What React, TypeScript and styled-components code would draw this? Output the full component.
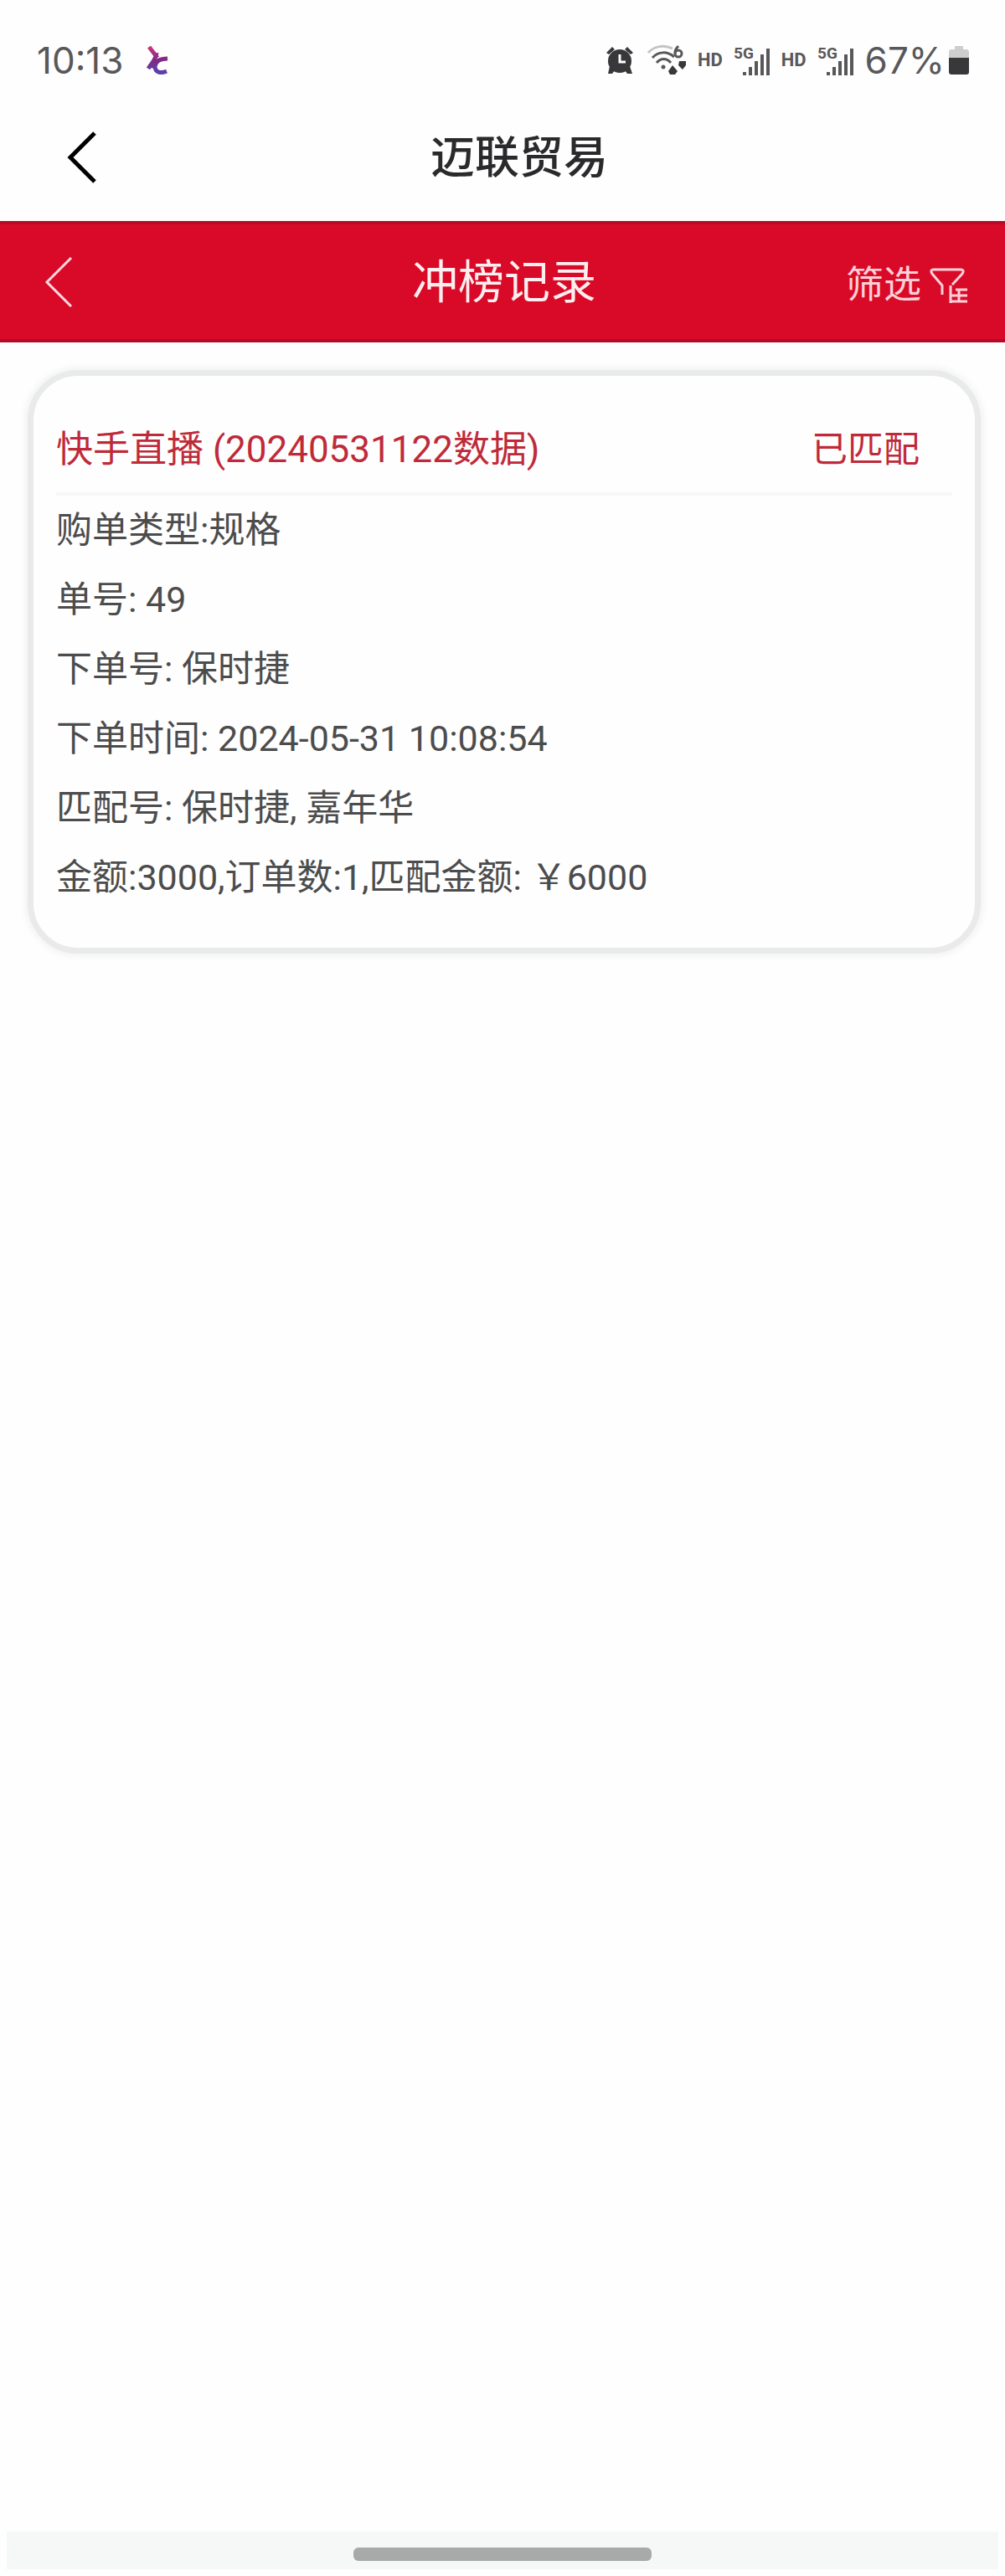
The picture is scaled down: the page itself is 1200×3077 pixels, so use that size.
import React from "react";
import styled, { createGlobalStyle } from "styled-components";

const GlobalStyle = createGlobalStyle`
  * { box-sizing: border-box; }
  body {
    margin: 0;
    background: #fefefe;
    font-family: Roboto, "Noto Sans CJK SC", sans-serif;
  }
  h1, h2, h3, p, ul { margin: 0; padding: 0; }
`;

const Screen = styled.div`
  display: flex;
  flex-direction: column;
  min-height: 100vh;
`;

const StatusBar = styled.div`
  display: flex;
  align-items: center;
  justify-content: space-between;
  height: 112px;
  padding: 32px 42px 0 44px;
  color: #58585a;
`;

const StatusGroup = styled.div<{ $gap: number }>`
  display: flex;
  align-items: center;
  gap: ${(p) => p.$gap}px;
`;

const StatusText = styled.span`
  font-family: Inter, Roboto, sans-serif;
  font-size: 44px;
  line-height: 48px;
`;

const Badge = styled.span`
  font-size: 22px;
  line-height: 24px;
  font-weight: 700;
`;

const AppHeader = styled.header`
  display: flex;
  align-items: center;
  height: 152px;
  padding: 0 76px 0 76px;
`;

const AppTitle = styled.h1`
  flex: 1;
  padding-top: 2px;
  text-align: center;
  font-size: 53px;
  line-height: 72px;
  font-weight: 500;
  color: #2a2a2c;
`;

const IconButton = styled.button`
  display: flex;
  padding: 0;
  border: 0;
  background: none;
  color: inherit;
  justify-self: start;
  cursor: pointer;
`;

const PageBar = styled.div`
  display: grid;
  grid-template-columns: 1fr auto 1fr;
  align-items: center;
  height: 145px;
  padding: 0 44px 0 48px;
  border-top: 4px solid #b60a26;
  border-bottom: 4px solid #b60a26;
  background: #d80a27;
  color: #ffd9df;
`;

const PageTitle = styled.h2`
  font-size: 55px;
  line-height: 72px;
  font-weight: 400;
  color: #ffeef0;
`;

const FilterButton = styled.button`
  display: flex;
  align-items: center;
  justify-self: end;
  gap: 10px;
  padding: 8px 0 0;
  border: 0;
  background: none;
  color: #ffd0d8;
  font-family: inherit;
  font-size: 45px;
  line-height: 60px;
  cursor: pointer;
`;

const Content = styled.main`
  flex: 1;
  padding: 33px 29px 32px 33px;
`;

const Card = styled.article`
  padding: 48px 27px 42px 27px;
  border-radius: 60px;
  background: #fefefe;
  border: 7px solid #e9eaea;
  box-shadow: 0 0 10px 2px #efefef;
`;

const CardHead = styled.div`
  display: flex;
  align-items: center;
  justify-content: space-between;
  height: 95px;
  padding: 0 39px 12px 0;
  border-bottom: 4px solid #f6f7f7;
  font-size: 43px;
  line-height: 60px;
  color: #bf2a3a;
`;

const CardTitle = styled.h3`
  font-size: 44px;
  font-weight: 400;
`;

const Rows = styled.ul`
  list-style: none;
  font-size: 43px;
  line-height: 83px;
  color: #4c4c4c;
`;

const NavBar = styled.footer`
  display: flex;
  justify-content: center;
  align-items: center;
  height: 45px;
  margin: 0 8px;
  margin-bottom: 8px;
  padding: 8px 0 0;
  background: #f6f8f8;
`;

const HomeHandle = styled.div`
  width: 30%;
  height: 16px;
  border-radius: 6px;
  background: #a8aaa9;
`;

const SignalDrawing = styled.svg`
  overflow: visible;
`;

const Chevron = ({ weight }: { weight: number }) => (
  <svg width="40" height="62" viewBox="0 0 40 62" fill="none" stroke="currentColor" strokeWidth={weight}>
    <path d="M37 2 L8 31 L37 60" />
  </svg>
);

const AppMark = () => (
  <svg width="26" height="34" viewBox="0 0 26 34" fill="none" strokeWidth="5">
    <defs>
      <linearGradient id="mark" gradientUnits="userSpaceOnUse" x1="0" y1="0" x2="0" y2="34">
        <stop offset="0" stopColor="#d3367c" />
        <stop offset="0.5" stopColor="#7c2a86" />
        <stop offset="1" stopColor="#5546b0" />
      </linearGradient>
    </defs>
    <path stroke="url(#mark)" d="M3 1 L13 14 M12 8 C11 17 6 20 2 27 M25 15 C17 15 11 17 10 24 C10 32 17 33 24 30 M4 23 L12 25" />
  </svg>
);

const AlarmIcon = () => (
  <svg width="36" height="34" viewBox="0 0 36 34" fill="#38383a">
    <path d="M0 8 L7 1 L10 4 L3 10Z M25 1 L32 8 L29 10 L22 4Z M4 24 L10 29 L7 33 L2 33Z M28 24 L22 29 L25 33 L31 33Z" />
    <circle cx="16" cy="18" r="14" />
    <path d="M16 10 V19 H23" fill="none" stroke="#fefefe" strokeWidth="3" />
  </svg>
);

const WifiIcon = () => (
  <svg width="47" height="38" viewBox="0 0 47 38" fill="none" stroke="#58585a" strokeWidth="3">
    <path d="M1 10 C8 2 20 0 30 5" stroke="#c4c4c4" />
    <path d="M6 16 C13 8 24 8 32 15" />
    <path d="M11 22 C16 16 23 16 28 22" />
    <circle cx="19" cy="27" r="2.5" fill="#58585a" stroke="none" />
    <path d="M37 2 C33 6 33 8 33 11" />
    <circle cx="37" cy="11" r="4" />
    <path d="M30 25 L36 32 L33 36 H27 L25 32Z M38 20 H46 V25 L42 30 L37 25Z" fill="#38383a" stroke="none" />
  </svg>
);

const SignalIcon = () => (
  <SignalDrawing width="44" height="38" viewBox="0 0 44 38" fill="#58585a">
    <text x="0" y="17" fontSize="19" fontWeight="700">5G</text>
    <path d="M11 33h4v4h-4z M18 27h4v10h-4z M25 20h4v17h-4z M32 12h4v25h-4z M39 5h4v32h-4z" />
  </SignalDrawing>
);

const BatteryIcon = () => (
  <svg width="26" height="36" viewBox="0 0 26 36">
    <path d="M8 1 H18 V5 H22 Q25 5 25 9 V16 H1 V9 Q1 5 4 5 H8Z" fill="#cdcdcd" />
    <path d="M1 15 H25 V32 Q25 35 22 35 H4 Q1 35 1 32Z" fill="#38383a" />
  </svg>
);

const FilterIcon = () => (
  <svg width="46" height="44" viewBox="0 0 46 44" fill="none" stroke="currentColor" strokeWidth="3">
    <path d="M15 33 V22 L3 8 Q0 3 5 3 H37 Q42 3 39 8 L27 21" strokeLinejoin="round" />
    <path d="M25 22 V43 M31 27 H45 M25 34 H45 M25 41 H45 M35 26 V42" />
  </svg>
);

const details = [
  "购单类型:规格",
  "单号: 49",
  "下单号: 保时捷",
  "下单时间: 2024-05-31 10:08:54",
  "匹配号: 保时捷, 嘉年华",
  "金额:3000,订单数:1,匹配金额: ￥6000",
];

export default function App() {
  return (
    <Screen>
      <GlobalStyle />
      <StatusBar>
        <StatusGroup $gap={28}>
          <StatusText>10:13</StatusText>
          <AppMark />
        </StatusGroup>
        <StatusGroup $gap={13}>
          <AlarmIcon />
          <WifiIcon />
          <Badge>HD</Badge>
          <SignalIcon />
          <Badge>HD</Badge>
          <SignalIcon />
          <StatusGroup $gap={4}>
            <StatusText>67%</StatusText>
            <BatteryIcon />
          </StatusGroup>
        </StatusGroup>
      </StatusBar>
      <AppHeader>
        <IconButton type="button" aria-label="返回">
          <Chevron weight={5} />
        </IconButton>
        <AppTitle>迈联贸易</AppTitle>
      </AppHeader>
      <PageBar>
        <IconButton type="button" aria-label="返回">
          <Chevron weight={3} />
        </IconButton>
        <PageTitle>冲榜记录</PageTitle>
        <FilterButton type="button">
          筛选
          <FilterIcon />
        </FilterButton>
      </PageBar>
      <Content>
        <Card>
          <CardHead>
            <CardTitle>快手直播 (20240531122数据)</CardTitle>
            <span>已匹配</span>
          </CardHead>
          <Rows>
            {details.map((line) => (
              <li key={line}>{line}</li>
            ))}
          </Rows>
        </Card>
      </Content>
      <NavBar>
        <HomeHandle />
      </NavBar>
    </Screen>
  );
}
